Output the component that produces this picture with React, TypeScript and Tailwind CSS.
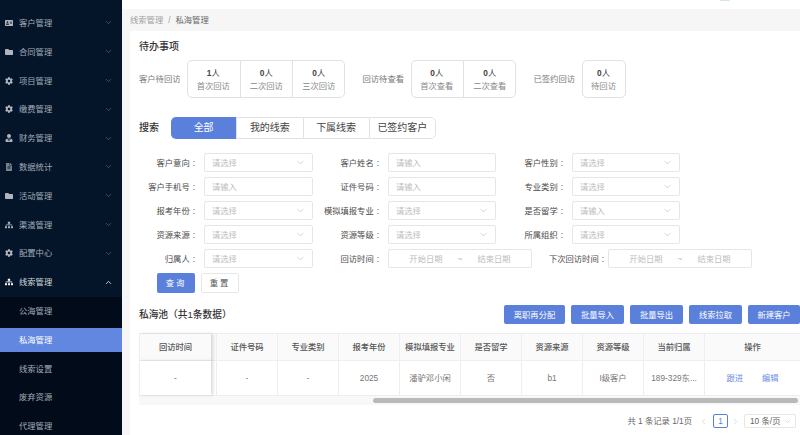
import { ChevronDown, ChevronLeft, ChevronRight, ChevronUp } from "lucide-react";
import type { IconType } from "react-icons";
import { FaAddressCard, FaCog, FaFileAlt, FaFolder, FaSitemap, FaUserTie } from "react-icons/fa";

const MENU: { label: string; icon: IconType; dim?: boolean }[] = [
  { label: "客户管理", icon: FaAddressCard },
  { label: "合同管理", icon: FaFolder },
  { label: "项目管理", icon: FaCog },
  { label: "缴费管理", icon: FaCog },
  { label: "财务管理", icon: FaUserTie },
  { label: "数据统计", icon: FaFileAlt, dim: true },
  { label: "活动管理", icon: FaFolder },
  { label: "渠道管理", icon: FaSitemap },
  { label: "配置中心", icon: FaCog },
];

const SUB_MENU = ["公海管理", "私海管理", "线索设置", "废弃资源", "代理管理"];

const TODOS = [
  { label: "客户待回访", cells: [["1", "首次回访"], ["0", "二次回访"], ["0", "三次回访"]] },
  { label: "回访待查看", cells: [["0", "首次查看"], ["0", "二次查看"]] },
  { label: "已签约回访", cells: [["0", "待回访"]] },
];

const TABS = ["全部", "我的线索", "下属线索", "已签约客户"];
const ACTIONS = [
  { label: "离职再分配", width: "w-[61px]" },
  { label: "批量导入", width: "w-[53px]" },
  { label: "批量导出", width: "w-[53px]" },
  { label: "线索拉取", width: "w-[53px]" },
  { label: "新建客户", width: "w-[52px]" },
];
const COLUMNS = ["证件号码", "专业类别", "报考年份", "模拟填报专业", "是否留学", "资源来源", "资源等级", "当前归属"];
const ROW = ["-", "-", "2025", "潘驴邓小闲", "否", "b1", "I级客户", "189-329东..."];

function Field({ label, labelWidth, placeholder, select, width = "w-[108px]" }: { label: string; labelWidth: string; placeholder: string; select?: boolean; width?: string }) {
  return (
    <div className="flex items-center">
      <span className={`${labelWidth} mr-[9px] text-right text-[#4a4a4a] whitespace-nowrap`}>
        {label}
        <span className="ml-[3px]">:</span>
      </span>
      <div className={`${width} h-[19px] flex items-center justify-between pl-[7px] pr-[6px] border border-[#e6e6e6] rounded-[2px] text-[#bdbdbd]`}>
        <span>{placeholder}</span>
        {select && <ChevronDown size={11} strokeWidth={1.25} className="text-[#b5b5b5]" />}
      </div>
    </div>
  );
}

function DateRange({ label, labelWidth, gap }: { label: string; labelWidth: string; gap: string }) {
  return (
    <div className="flex items-center">
      <span className={`${labelWidth} ${gap} text-right text-[#4a4a4a] whitespace-nowrap`}>
        {label}
        <span className="ml-[3px]">:</span>
      </span>
      <div className="w-[144px] h-[19px] flex items-center justify-center gap-[15px] border border-[#e6e6e6] rounded-[2px] text-[#bdbdbd]">
        <span>开始日期</span>
        <span>~</span>
        <span>结束日期</span>
      </div>
    </div>
  );
}

export default function App() {
  return (
    <div className="w-[800px] h-[435px] overflow-hidden flex bg-white text-[8.3px] leading-[12px] font-['Liberation_Sans','Noto_Sans_CJK_SC',sans-serif]">
      <aside className="w-[122px] h-full shrink-0 bg-[#04152a] text-[#a3abb6] pt-[8.6px] overflow-hidden">
        {MENU.map(({ label, icon: Icon, dim }) => (
          <div key={label} className="h-[28.8px] flex items-center pl-[5px] pr-[9px]">
            <Icon size={8} className={`w-[8px] shrink-0 ${dim ? "text-[#78828f]" : "text-[#aeb5bf]"}`} />
            <span className="ml-[6px] flex-1">{label}</span>
            <ChevronDown size={9} strokeWidth={1.5} className="text-[#6d7887]" />
          </div>
        ))}
        <div className="h-[28.8px] flex items-center pl-[5px] pr-[9px] text-[#d3d7dc]">
          <FaSitemap size={8} className="w-[8px] shrink-0 text-white" />
          <span className="ml-[6px] flex-1">线索管理</span>
          <ChevronUp size={9} strokeWidth={2} className="text-white" />
        </div>
        <div className="bg-[#020b1a]">
          {SUB_MENU.map((item) => (
            <div key={item} className="h-[28.8px] flex items-center">
              <div className={`w-full h-[24px] flex items-center pl-[19px] ${item === "私海管理" ? "bg-[#6287e0] text-white" : ""}`}>
                {item}
              </div>
            </div>
          ))}
        </div>
      </aside>

      <main className="flex-1 min-w-0 flex flex-col bg-[#f6f6f6]">
        <header className="h-[9px] shrink-0 bg-white flex justify-end pr-[70px]">
          <div className="w-[10px] h-[1px] rounded-b-full bg-[#cfe9e8]" />
        </header>
        <nav className="h-[22px] shrink-0 flex items-center pl-[8px] text-[#a0a0a0]">
          线索管理
          <span className="mx-[5px]">/</span>
          <span className="text-[#666]">私海管理</span>
        </nav>

        <section className="flex-1 ml-[8px] bg-white pl-[9px] pt-[9px]">
          <h2 className="text-[10px] leading-[14px] font-medium text-[#333]">待办事项</h2>

          <div className="mt-[6px] flex items-center">
            {TODOS.map((group) => (
              <div key={group.label} className="flex items-center mr-[18px]">
                <span className="mr-[6px] w-[42px] text-[#777] whitespace-nowrap">{group.label}</span>
                <div className="h-[38px] flex rounded-[5px] outline outline-[#e2e2e2] -outline-offset-1">
                  {group.cells.map(([count, name], i) => (
                    <div
                      key={name}
                      className={`${group.cells.length === 1 ? "w-[44px]" : "w-[52.5px]"} flex flex-col items-center justify-center gap-[1px] ${i > 0 ? "border-l border-[#e2e2e2]" : ""}`}
                    >
                      <span className="text-[#444]">
                        <b className="font-bold">{count}</b>人
                      </span>
                      <span className="text-[#888]">{name}</span>
                    </div>
                  ))}
                </div>
              </div>
            ))}
          </div>

          <div className="mt-[19px] flex items-center">
            <span className="w-[32px] text-[10px] font-medium text-[#333]">搜索</span>
            <div className="flex h-[22px] w-[265px] rounded-[5px] overflow-hidden text-[10px]">
              {TABS.map((tab, i) => (
                <div
                  key={tab}
                  className={`flex-1 flex items-center justify-center ${i === 0 ? "bg-[#5b80dc] text-white" : "border-y border-l border-[#e2e2e2] text-[#444]"} ${i === 3 ? "border-r rounded-r-[5px]" : ""}`}
                >
                  {tab}
                </div>
              ))}
            </div>
          </div>

          <div className="mt-[14px] flex flex-col gap-[5px]">
            <div className="flex">
              <Field label="客户意向" labelWidth="w-[56px]" placeholder="请选择" select width="w-[109px]" />
              <Field label="客户姓名" labelWidth="w-[66px]" placeholder="请输入" />
              <Field label="客户性别" labelWidth="w-[67px]" placeholder="请选择" select />
            </div>
            <div className="flex">
              <Field label="客户手机号" labelWidth="w-[56px]" placeholder="请输入" width="w-[109px]" />
              <Field label="证件号码" labelWidth="w-[66px]" placeholder="请输入" />
              <Field label="专业类别" labelWidth="w-[67px]" placeholder="请选择" select />
            </div>
            <div className="flex">
              <Field label="报考年份" labelWidth="w-[56px]" placeholder="请选择" select width="w-[109px]" />
              <Field label="模拟填报专业" labelWidth="w-[66px]" placeholder="请选择" select />
              <Field label="是否留学" labelWidth="w-[67px]" placeholder="请输入" select />
            </div>
            <div className="flex">
              <Field label="资源来源" labelWidth="w-[56px]" placeholder="请选择" select width="w-[109px]" />
              <Field label="资源等级" labelWidth="w-[66px]" placeholder="请选择" select />
              <Field label="所属组织" labelWidth="w-[67px]" placeholder="请选择" select />
            </div>
            <div className="flex">
              <Field label="归属人" labelWidth="w-[56px]" placeholder="请选择" select width="w-[109px]" />
              <DateRange label="回访时间" labelWidth="w-[66px]" gap="mr-[9px]" />
              <DateRange label="下次回访时间" labelWidth="w-[72px]" gap="mr-[4px]" />
            </div>
          </div>

          <div className="mt-[5px] ml-[18px] flex gap-[6px]">
            <button className="w-[38px] h-[20px] rounded-[2px] bg-[#5b80dc] text-white tracking-[2px]">查询</button>
            <button className="w-[38px] h-[20px] rounded-[2px] border border-[#e6e6e6] text-[#555] tracking-[2px]">重置</button>
          </div>

          <div className="mt-[12px] h-[19px] flex items-center justify-between">
            <h2 className="text-[9.7px] font-medium text-[#333]">私海池（共1条数据）</h2>
            <div className="flex gap-[6px]">
              {ACTIONS.map((action) => (
                <button key={action.label} className={`${action.width} h-[19px] rounded-[2px] bg-[#5b80dc] text-white`}>
                  {action.label}
                </button>
              ))}
            </div>
          </div>

          <div className="mt-[9px] border-y border-[#eeeeee] grid grid-cols-[72px_5px_repeat(8,61px)_96px] grid-rows-[27px_34px] text-center text-[#777]">
            <div className="relative z-10 flex items-center justify-center bg-[#fafafa] border-l border-b border-[#eeeeee] font-medium text-[#555] shadow-[2px_0_3px_rgba(0,0,0,0.15)]">回访时间</div>
            <div className="bg-[#fafafa] border-b border-[#eeeeee]" />
            {COLUMNS.map((column) => (
              <div key={column} className="flex items-center justify-center bg-[#fafafa] border-l border-b border-[#eeeeee] font-medium text-[#555]">
                {column}
              </div>
            ))}
            <div className="flex items-center justify-center bg-[#fafafa] border-l border-b border-[#eeeeee] font-medium text-[#555]">操作</div>

            <div className="relative z-10 flex items-center justify-center bg-white border-l border-[#eeeeee] shadow-[2px_0_3px_rgba(0,0,0,0.15)]">-</div>
            <div />
            {ROW.map((cell, i) => (
              <div key={i} className="flex items-center justify-center border-l border-[#eeeeee] whitespace-nowrap">
                {cell}
              </div>
            ))}
            <div className="flex items-center justify-center gap-[19px] border-l border-[#eeeeee] text-[#6d8fe0]">
              <span>跟进</span>
              <span>编辑</span>
            </div>
          </div>

          <div className="h-[9px] bg-[#f8f8f8] pl-[234px] pr-[2px] pt-[2px]">
            <div className="h-[5px] rounded-full bg-[#b9b9b9]" />
          </div>

          <div className="mt-[9px] pr-[4px] flex items-center justify-end text-[#666]">
            <span>共 1 条记录 1/1页</span>
            <ChevronLeft size={9} strokeWidth={1.25} className="ml-[7px] text-[#bbb]" />
            <span className="ml-[5px] w-[15px] h-[14px] flex items-center justify-center border border-[#5b80dc] rounded-[2px] text-[#5b80dc]">1</span>
            <ChevronRight size={9} strokeWidth={1.25} className="ml-[3px] text-[#bbb]" />
            <span className="ml-[4px] w-[52px] h-[14px] flex items-center justify-between pl-[5px] pr-[3px] border border-[#e6e6e6] rounded-[2px]">
              10 条/页
              <ChevronDown size={9} strokeWidth={1.25} className="text-[#b5b5b5]" />
            </span>
          </div>
        </section>
      </main>
    </div>
  );
}
